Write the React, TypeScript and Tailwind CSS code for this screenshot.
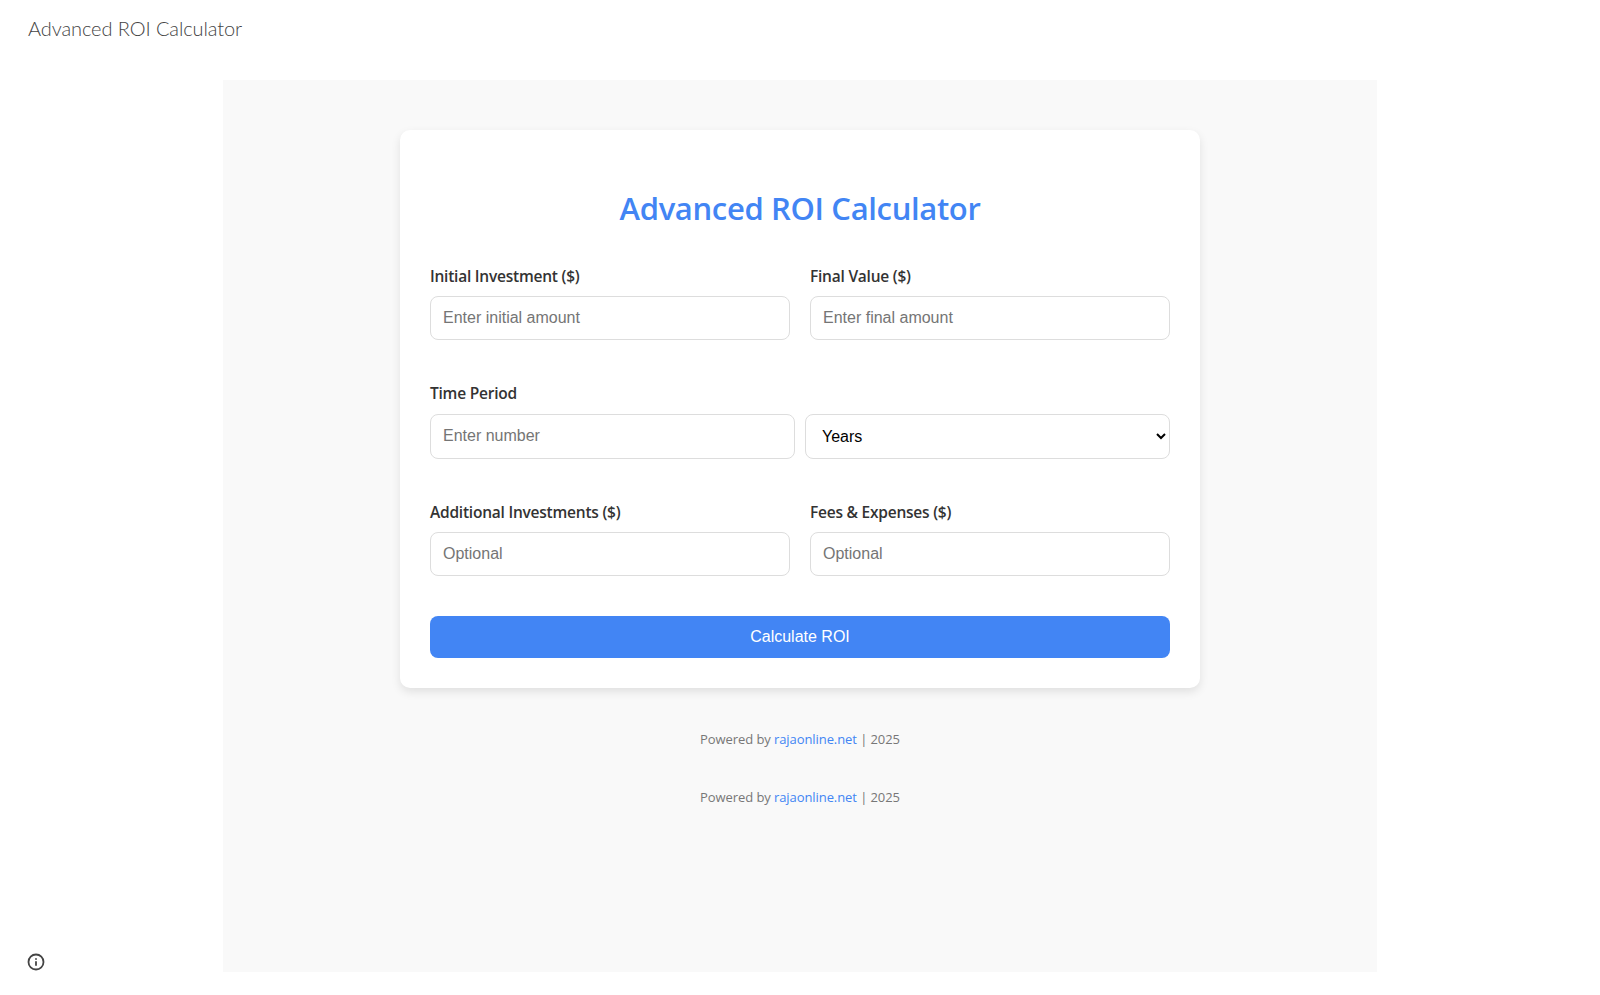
import { Info } from "lucide-react";

const labelBase = "block font-['Open_Sans',sans-serif] text-[15.5px] leading-[21px] font-semibold tracking-[-0.23px] text-[#333333]";
const inputClass =
  "h-[44px] w-full rounded-lg border border-[#dddddd] bg-white px-3 font-['Liberation_Sans',sans-serif] text-base text-black outline-none placeholder:text-[#757575]";

function Field({ label, placeholder }: { label: string; placeholder: string }) {
  return (
    <div className="w-[360px]">
      <label className={`${labelBase} mb-[9px]`}>{label}</label>
      <input type="number" className={inputClass} placeholder={placeholder} />
    </div>
  );
}

function PoweredBy() {
  return (
    <p className="text-center font-['Open_Sans',sans-serif] text-[13px] leading-[18px] tracking-[-0.08px] text-[#777777]">
      Powered by <a className="text-[#4285f4]" href="#">rajaonline.net</a> | 2025
    </p>
  );
}

export default function App() {
  return (
    <div className="relative h-[995px] overflow-hidden bg-white">
      <header className="flex h-[80px] items-start pt-[14px] pl-[28px]">
        <span className="font-['Lato',sans-serif] text-[20px] leading-[28px] font-light tracking-[-0.09px] text-[#444444]">
          Advanced ROI Calculator
        </span>
      </header>
      <main className="mx-auto h-[892px] w-[1154px] bg-[#f9f9f9] pt-[50px]">
        <section className="mx-auto w-[800px] rounded-[10px] bg-white px-[30px] pt-[56px] pb-[30px] shadow-[0_4px_10px_rgba(0,0,0,0.1)]">
          <h1 className="mb-[36px] text-center font-['Open_Sans',sans-serif] text-[31px] leading-[44px] font-semibold tracking-[-0.35px] text-[#4285f4]">
            Advanced ROI Calculator
          </h1>
          <div className="flex justify-between">
            <Field label="Initial Investment ($)" placeholder="Enter initial amount" />
            <Field label="Final Value ($)" placeholder="Enter final amount" />
          </div>
          <div className="mt-[43px]">
            <label className={`${labelBase} mb-[10px]`}>Time Period</label>
            <div className="grid grid-cols-2 gap-[10px]">
              <input type="number" className={`${inputClass} h-[45px] pb-[2px]`} placeholder="Enter number" />
              <select className="h-[45px] w-full rounded-lg border border-[#dddddd] bg-white pl-3 font-['Liberation_Sans',sans-serif] text-base text-black outline-none" defaultValue="Years">
                <option>Years</option>
                <option>Months</option>
                <option>Days</option>
              </select>
            </div>
          </div>
          <div className="mt-[43px] flex justify-between">
            <Field label="Additional Investments ($)" placeholder="Optional" />
            <Field label="Fees & Expenses ($)" placeholder="Optional" />
          </div>
          <button className="mt-[40px] h-[42px] w-full rounded-lg bg-[#4285f4] font-['Liberation_Sans',sans-serif] text-base text-white">
            Calculate ROI
          </button>
        </section>
        <div className="mt-[42px] flex flex-col gap-[40px]">
          <PoweredBy />
          <PoweredBy />
        </div>
      </main>
      <Info className="absolute top-[953px] left-[27px] h-[18px] w-[18px] text-[#444444]" strokeWidth={2.4} />
    </div>
  );
}
